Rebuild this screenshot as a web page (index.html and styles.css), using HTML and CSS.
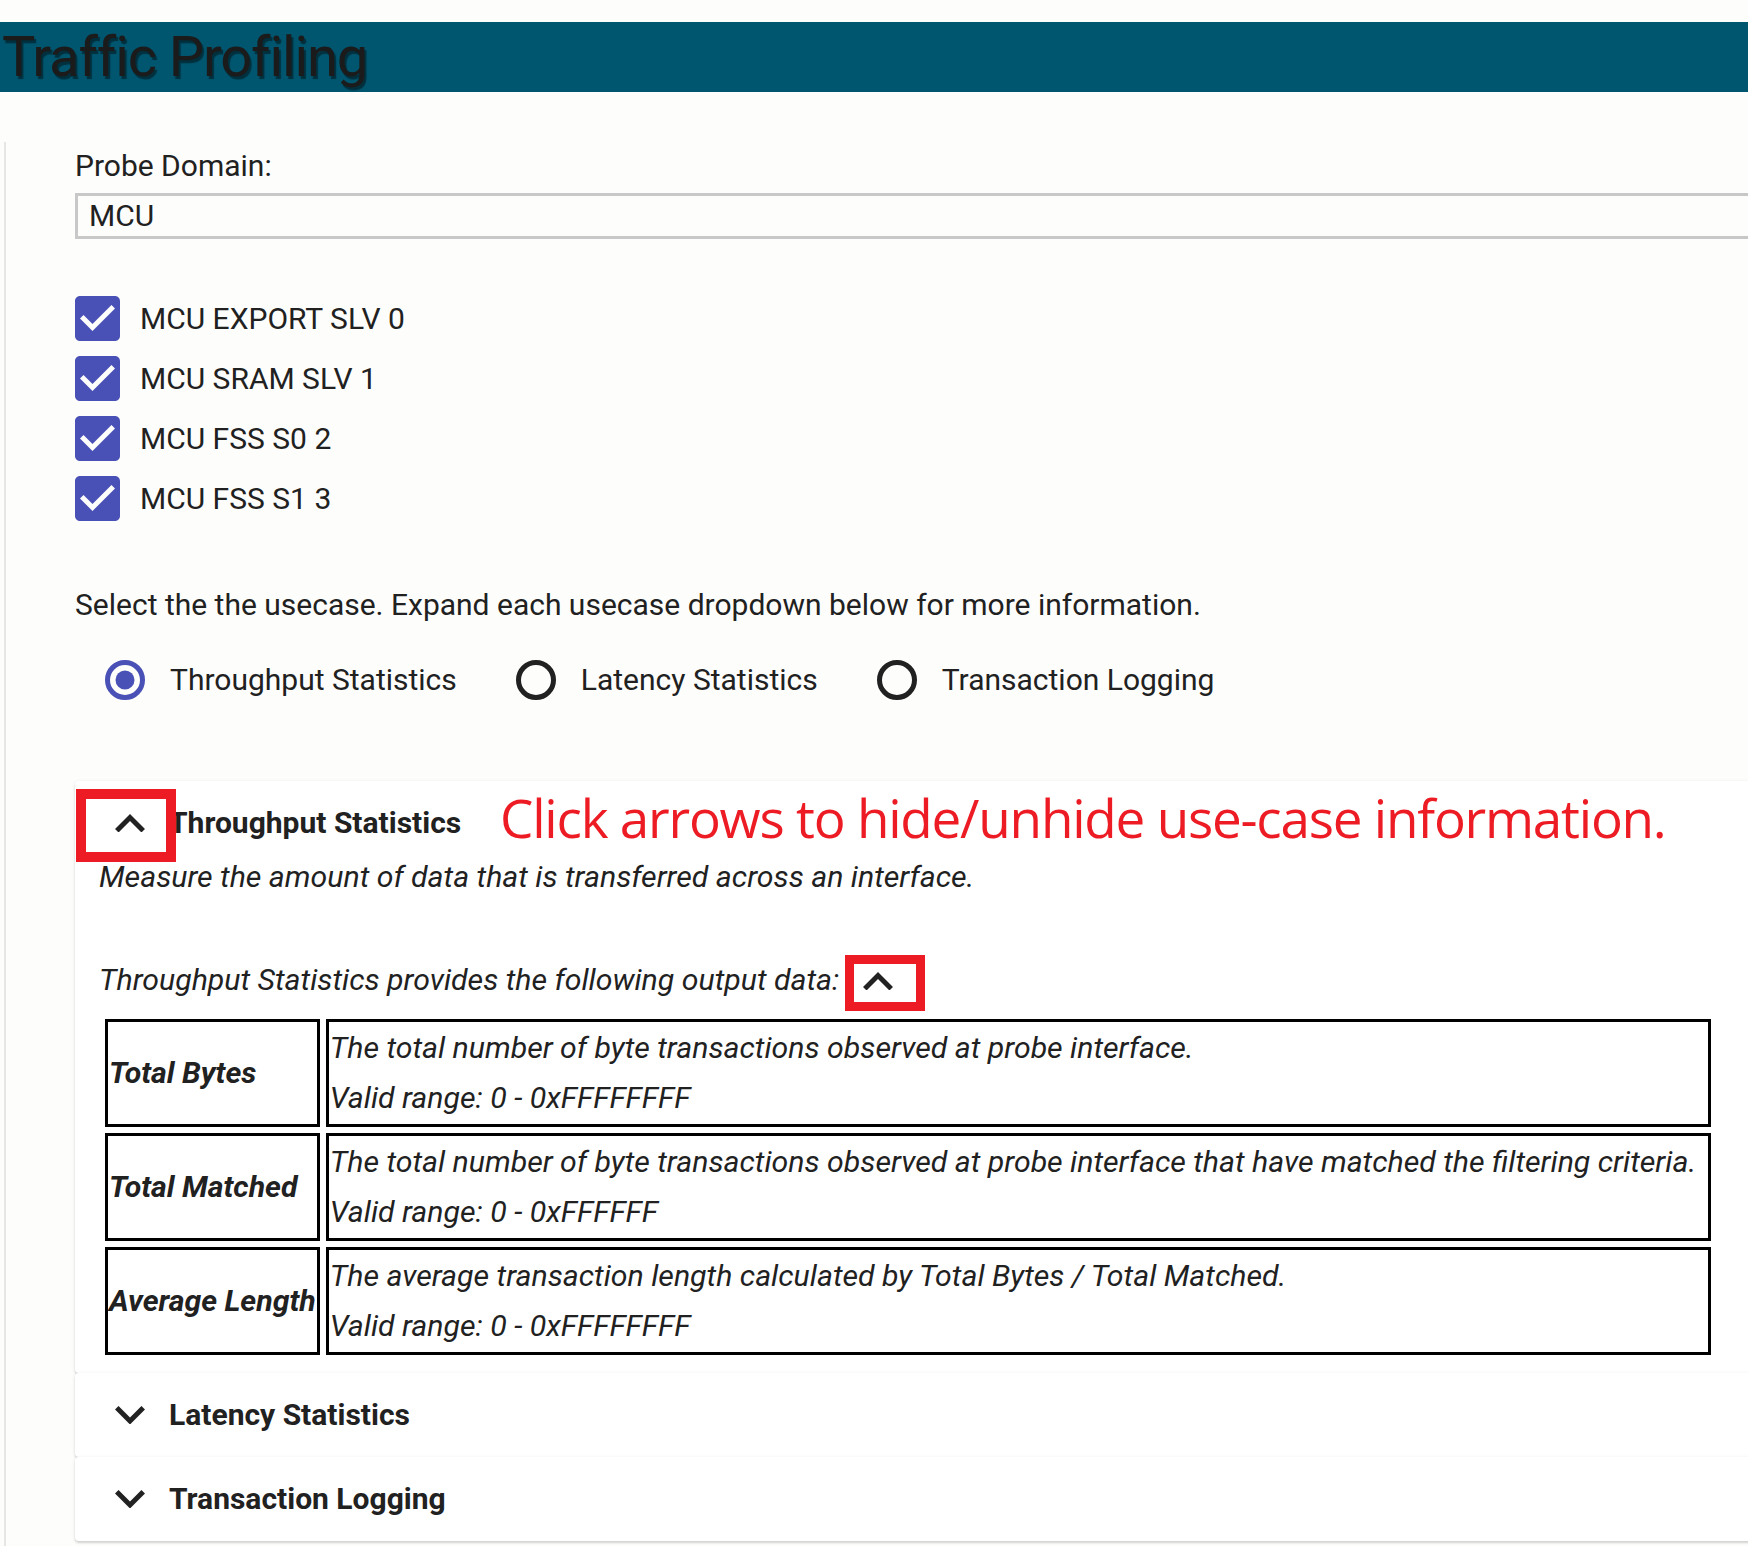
FILE: index.html
```html
<!DOCTYPE html>
<html lang="en">
<head>
<meta charset="utf-8">
<title>Traffic Profiling</title>
<link rel="stylesheet" href="styles.css">
</head>
<body>
<header class="topbar"><h1 class="title">Traffic Profiling</h1></header>
<main class="main">
  <div class="field">
    <label class="field-label">Probe Domain:</label>
    <div class="select">MCU</div>
  </div>
  <ul class="checks">
    <li class="check"><svg class="cb" viewBox="3 3 18 18" width="45" height="45"><path d="M19 3H5c-1.11 0-2 .9-2 2v14c0 1.1.89 2 2 2h14c1.11 0 2-.9 2-2V5c0-1.1-.89-2-2-2zm-9 14l-5-5 1.41-1.41L10 14.17l7.59-7.59L19 8l-9 9z"/></svg><span>MCU EXPORT SLV 0</span></li>
    <li class="check"><svg class="cb" viewBox="3 3 18 18" width="45" height="45"><path d="M19 3H5c-1.11 0-2 .9-2 2v14c0 1.1.89 2 2 2h14c1.11 0 2-.9 2-2V5c0-1.1-.89-2-2-2zm-9 14l-5-5 1.41-1.41L10 14.17l7.59-7.59L19 8l-9 9z"/></svg><span>MCU SRAM SLV 1</span></li>
    <li class="check"><svg class="cb" viewBox="3 3 18 18" width="45" height="45"><path d="M19 3H5c-1.11 0-2 .9-2 2v14c0 1.1.89 2 2 2h14c1.11 0 2-.9 2-2V5c0-1.1-.89-2-2-2zm-9 14l-5-5 1.41-1.41L10 14.17l7.59-7.59L19 8l-9 9z"/></svg><span>MCU FSS S0 2</span></li>
    <li class="check"><svg class="cb" viewBox="3 3 18 18" width="45" height="45"><path d="M19 3H5c-1.11 0-2 .9-2 2v14c0 1.1.89 2 2 2h14c1.11 0 2-.9 2-2V5c0-1.1-.89-2-2-2zm-9 14l-5-5 1.41-1.41L10 14.17l7.59-7.59L19 8l-9 9z"/></svg><span>MCU FSS S1 3</span></li>
  </ul>
  <p class="prompt">Select the the usecase. Expand each usecase dropdown below for more information.</p>
  <div class="radios">
    <label class="radio"><svg viewBox="0 0 40 40" width="40" height="40"><circle cx="20" cy="20" r="17.5" class="ring ring-on"/><circle cx="20" cy="20" r="9.5" class="dot"/></svg><span>Throughput Statistics</span></label>
    <label class="radio"><svg viewBox="0 0 40 40" width="40" height="40"><circle cx="20" cy="20" r="17.5" class="ring"/></svg><span>Latency Statistics</span></label>
    <label class="radio"><svg viewBox="0 0 40 40" width="40" height="40"><circle cx="20" cy="20" r="17.5" class="ring"/></svg><span>Transaction Logging</span></label>
  </div>
  <section class="accordion">
    <div class="panel panel-open">
      <div class="panel-head">
        <svg class="chev" viewBox="6 8 12 7.41" width="30" height="18.5"><path d="M12 8l-6 6 1.41 1.41L12 10.83l4.59 4.58L18 14z"/></svg>
        <span class="panel-title">Throughput Statistics</span>
      </div>
      <div class="panel-body">
        <p class="desc">Measure the amount of data that is transferred across an interface.</p>
        <p class="desc desc-out">Throughput Statistics provides the following output data:<span class="toggle"><svg class="chev" viewBox="6 8 12 7.41" width="30" height="18.5"><path d="M12 8l-6 6 1.41 1.41L12 10.83l4.59 4.58L18 14z"/></svg><span class="annot annot-sm"></span></span></p>
        <table class="stats">
          <tr>
            <td class="stat-name">Total Bytes</td>
            <td class="stat-desc">The total number of byte transactions observed at probe interface.<br>Valid range: 0 - 0xFFFFFFFF</td>
          </tr>
          <tr>
            <td class="stat-name">Total Matched</td>
            <td class="stat-desc">The total number of byte transactions observed at probe interface that have matched the filtering criteria.<br>Valid range: 0 - 0xFFFFFF</td>
          </tr>
          <tr>
            <td class="stat-name">Average Length</td>
            <td class="stat-desc">The average transaction length calculated by Total Bytes / Total Matched.<br>Valid range: 0 - 0xFFFFFFFF</td>
          </tr>
        </table>
      </div>
      <span class="annot annot-lg"></span>
      <span class="annot-text">Click arrows to hide/unhide use-case information.</span>
    </div>
    <div class="panel">
      <div class="panel-head">
        <svg class="chev" viewBox="6 8.59 12 7.41" width="30" height="18.5"><path d="M16.59 8.59L12 13.17 7.41 8.59 6 10l6 6 6-6z"/></svg>
        <span class="panel-title">Latency Statistics</span>
      </div>
    </div>
    <div class="panel">
      <div class="panel-head">
        <svg class="chev" viewBox="6 8.59 12 7.41" width="30" height="18.5"><path d="M16.59 8.59L12 13.17 7.41 8.59 6 10l6 6 6-6z"/></svg>
        <span class="panel-title">Transaction Logging</span>
      </div>
    </div>
  </section>
</main>
</body>
</html>
```
FILE: styles.css
```css
html, body {
  margin: 0;
  padding: 0;
  background: #fdfdfb;
  overflow: hidden;
}
body {
  font-family: Roboto, "Liberation Sans", sans-serif;
  font-size: 30px;
  color: #212121;
}
.topbar {
  margin-top: 22px;
  height: 70px;
  background: #00566f;
  padding-left: 2px;
}
.title {
  margin: 0;
  font-size: 56px;
  font-weight: 400;
  line-height: 70px;
  letter-spacing: -1.1px;
  color: #1b1b1b;
  text-shadow: 2px 3px 1px rgba(0, 0, 0, 0.45);
  white-space: nowrap;
}
.main {
  margin-top: 50px;
  margin-left: 4px;
  border-left: 2px solid #e6e6e6;
  padding-left: 69px;
  padding-top: 6px;
  width: 1800px;
  min-height: 1500px;
}
.field-label {
  display: block;
  line-height: 36px;
}
.select {
  margin-top: 9px;
  height: 40px;
  border: 3px solid #c8c8c8;
  padding-left: 11px;
  line-height: 40px;
}
.checks {
  list-style: none;
  margin: 57px 0 0;
  padding: 0;
  display: flex;
  flex-direction: column;
  gap: 15px;
}
.check {
  display: flex;
  align-items: center;
  gap: 20px;
  height: 45px;
  line-height: 36px;
}
.cb {
  display: block;
  fill: #4951b6;
  flex: none;
}
.prompt {
  margin: 66px 0 0;
  line-height: 36px;
}
.radios {
  margin-top: 37px;
  display: flex;
  padding-left: 30px;
  gap: 59px;
}
.radio {
  display: flex;
  align-items: center;
  gap: 25px;
  line-height: 36px;
}
.radio svg {
  display: block;
  flex: none;
}
.ring {
  fill: none;
  stroke: #212121;
  stroke-width: 5;
}
.ring-on {
  stroke: #4951b6;
}
.dot {
  fill: #4951b6;
}
.accordion {
  margin-top: 81px;
}
.panel {
  position: relative;
  background: #ffffff;
  border-radius: 4px;
  box-shadow: 0 2px 2px 0 rgba(0, 0, 0, 0.12), 0 1px 4px 0 rgba(0, 0, 0, 0.08);
}
.panel-head {
  box-sizing: border-box;
  display: flex;
  align-items: center;
  gap: 24px;
  height: 84px;
  padding-left: 40px;
}
.panel-open .panel-head {
  height: 78px;
  padding-top: 6px;
}
.chev {
  display: block;
  fill: #222222;
  flex: none;
}
.panel-title {
  font-weight: 700;
  line-height: 36px;
}
.panel-body {
  padding: 0 0 12px 24px;
}
.desc {
  margin: 0;
  font-style: italic;
  font-size: 30.25px;
  line-height: 36px;
}
.desc-out {
  margin-top: 67px;
}
.toggle {
  display: inline-block;
  position: relative;
  margin-left: 24px;
  vertical-align: baseline;
}
.stats {
  margin-top: 15px;
  border-spacing: 6px 6px;
}
.stats td {
  border: 3px solid #000;
  padding: 1px;
  font-size: 30.25px;
  line-height: 50px;
  font-style: italic;
  vertical-align: middle;
  white-space: nowrap;
}
.stats .stat-name {
  font-weight: 700;
}
.stats .stat-desc {
  padding-right: 12px;
}
.annot {
  position: absolute;
  box-sizing: border-box;
  border: 10px solid #ed1c24;
  z-index: 2;
}
.annot-lg {
  left: 1px;
  top: 8px;
  width: 100px;
  height: 73px;
}
.annot-sm {
  left: -18px;
  top: -16.5px;
  width: 80px;
  height: 56px;
  border-width: 9px;
}
.annot-text {
  position: absolute;
  left: 425px;
  top: 10px;
  font-family: "Open Sans", "Noto Sans", sans-serif;
  font-size: 53px;
  line-height: 53px;
  letter-spacing: -1.22px;
  color: #ed1c24;
  white-space: nowrap;
}
```
